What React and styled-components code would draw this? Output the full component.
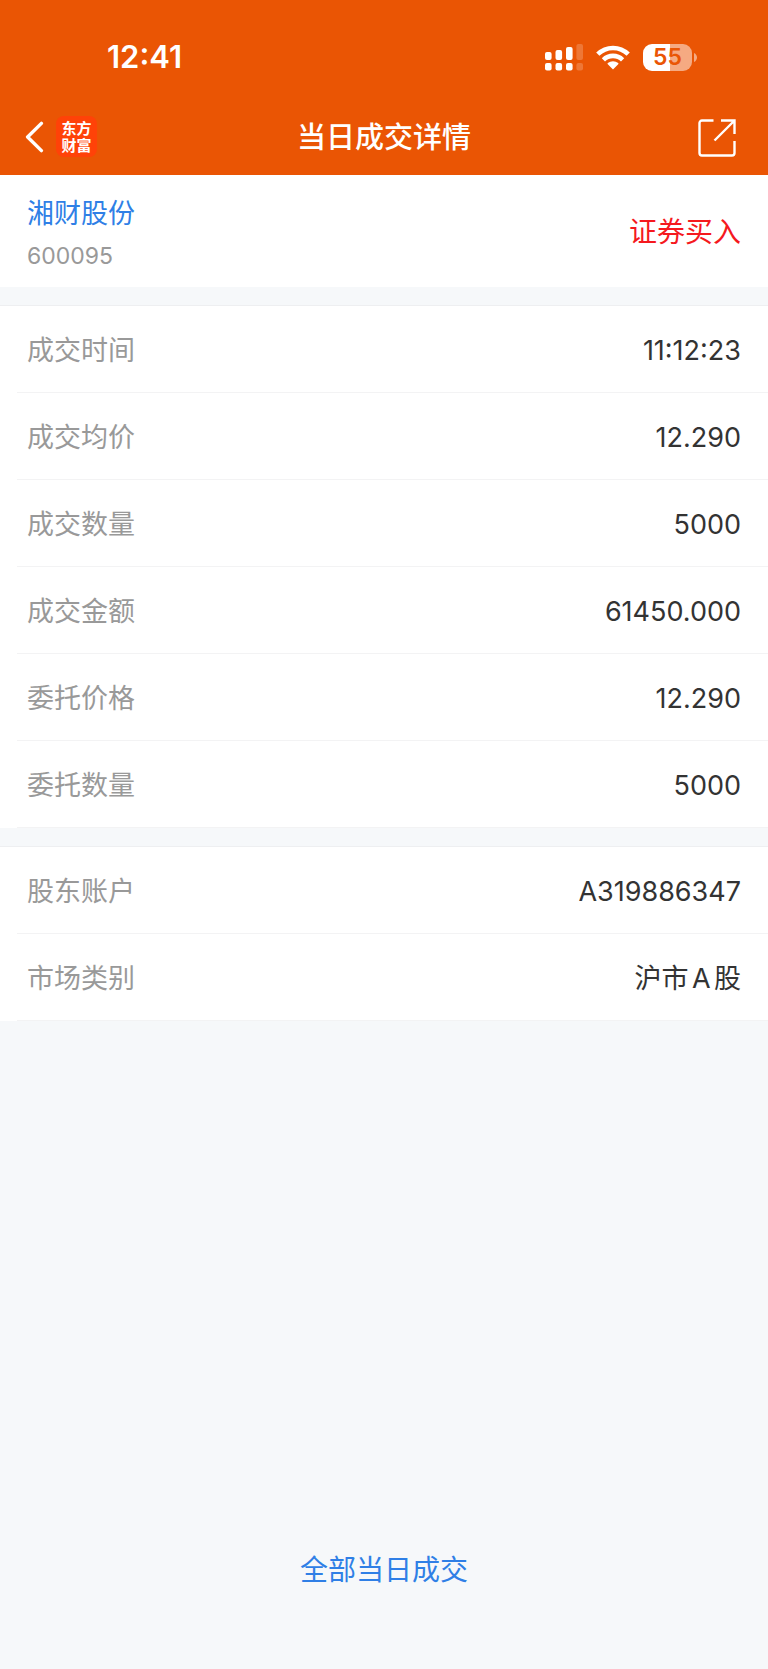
import React from 'react'
import styled, { createGlobalStyle } from 'styled-components'

const GlobalStyle = createGlobalStyle`
  * {
    box-sizing: border-box;
  }
  body {
    margin: 0;
    background: #f6f8fa;
    font-family: Inter, "Noto Sans CJK SC", sans-serif;
    text-autospace: normal;
  }
`

const Page = styled.div`
  display: flex;
  flex-direction: column;
  min-height: 100vh;
`

const Header = styled.header`
  background: #ea5504;
  color: #fff;
`

const StatusBar = styled.div`
  display: flex;
  align-items: center;
  justify-content: space-between;
  height: 100px;
  padding: 14px 71px 0 107px;
`

const Clock = styled.time`
  font-size: 31px;
  line-height: 36px;
  font-weight: 600;
`

const StatusIcons = styled.div`
  display: flex;
  align-items: center;
  gap: 13px;
`

const BatteryWrap = styled.div`
  display: flex;
  align-items: center;
  gap: 2px;
`

const Battery = styled.div`
  width: 49px;
  height: 27px;
  border-radius: 9px;
  background: linear-gradient(
    90deg,
    #fff ${({ $level }) => $level}%,
    #f5aa82 ${({ $level }) => $level}%
  );
  color: #ea5504;
  font-size: 23px;
  line-height: 27px;
  font-weight: 600;
  text-align: center;
`

const NavBar = styled.nav`
  display: grid;
  grid-template-columns: 1fr auto 1fr;
  align-items: center;
  height: 75px;
  padding: 0 25px;
`

const BackButton = styled.button`
  justify-self: start;
  display: flex;
  align-items: center;
  gap: 12px;
  padding: 0 0 2px;
  border: 0;
  background: none;
  color: #fff;
  font-family: inherit;
`

const Logo = styled.span`
  width: 41px;
  height: 41px;
  padding: 4px 0;
  border-radius: 8px;
  background: #ff4208;
  font-size: 15px;
  line-height: 17px;
  font-weight: 700;
`

const Title = styled.h1`
  margin: 0;
  font-size: 29px;
  line-height: 40px;
  font-weight: 500;
`

const ShareButton = styled.button`
  justify-self: end;
  display: flex;
  padding: 0 7px;
  border: 0;
  background: none;
  color: #fff;
`

const Summary = styled.section`
  display: flex;
  align-items: center;
  justify-content: space-between;
  height: 112px;
  padding: 0 27px;
  background: #fff;
`

const Stock = styled.div`
  padding-top: 4px;
`

const StockName = styled.a`
  display: block;
  color: #2f7fe6;
  font-size: 27px;
  line-height: 40px;
  text-decoration: none;
`

const StockCode = styled.div`
  padding-top: 6px;
  color: #999;
  font-size: 23px;
  line-height: 32px;
`

const Side = styled.div`
  padding-top: 2px;
  color: #f5191e;
  font-size: 28px;
  line-height: 40px;
`

const Group = styled.dl`
  margin: 19px 0 0;
  background: #fff;
  box-shadow: 0 -1px 0 #eeeff1;
`

const Row = styled.div`
  display: flex;
  align-items: center;
  justify-content: space-between;
  height: 87px;
  margin-left: 17px;
  padding: 4px 27px 0 10px;
  border-bottom: 1px solid #f3f3f4;
`

const Label = styled.dt`
  color: #999;
  font-size: 27px;
  line-height: 40px;
`

const Value = styled.dd`
  margin: 0;
  color: #333;
  font-size: 27px;
  line-height: 40px;
`

const Footer = styled.footer`
  display: flex;
  justify-content: center;
  margin-top: auto;
  padding: 40px 0 79px;
`

const AllTradesLink = styled.a`
  color: #2f7fe6;
  font-size: 28px;
  line-height: 40px;
  text-decoration: none;
`

const tradeRows = [
  ['成交时间', '11:12:23'],
  ['成交均价', '12.290'],
  ['成交数量', '5000'],
  ['成交金额', '61450.000'],
  ['委托价格', '12.290'],
  ['委托数量', '5000'],
]

const accountRows = [
  ['股东账户', 'A319886347'],
  ['市场类别', '沪市A股'],
]

const SignalIcon = () => (
  <svg width="38" height="27" viewBox="0 0 38 27" fill="currentColor" aria-hidden="true">
    <rect x="0" y="8" width="6.6" height="8" rx="2" />
    <rect x="10.5" y="6" width="6.6" height="10" rx="2" />
    <rect x="21" y="3" width="6.6" height="13" rx="2" />
    <rect x="0" y="19" width="6.6" height="7.5" rx="2" />
    <rect x="10.5" y="19" width="6.6" height="7.5" rx="2" />
    <rect x="21" y="19" width="6.6" height="7.5" rx="2" />
    <g opacity="0.2">
      <rect x="31.4" y="0" width="6.6" height="16" rx="2" />
      <rect x="31.4" y="19" width="6.6" height="7.5" rx="2" />
    </g>
  </svg>
)

const WifiIcon = () => (
  <svg width="34" height="25" viewBox="0 0 34 25" aria-hidden="true">
    <g fill="none" stroke="currentColor" strokeWidth="4.6">
      <path d="M1.8 9.2a21.6 21.6 0 0 1 30.4 0" />
      <path d="M7.4 14.8a13.7 13.7 0 0 1 19.2 0" />
    </g>
    <path
      d="M17 24.4 11.8 19.3c-.4-.4-.4-.9 0-1.2a8 8 0 0 1 10.4 0c.4.3.4.8 0 1.2z"
      fill="currentColor"
    />
  </svg>
)

const BatteryTip = () => (
  <svg width="3" height="9" viewBox="0 0 3 9" aria-hidden="true">
    <path d="M0 0c4 1.8 4 7.2 0 9z" fill="#f5aa82" />
  </svg>
)

const BackIcon = () => (
  <svg width="19" height="32" viewBox="0 0 19 32" fill="none" aria-hidden="true">
    <path
      d="M16.4 2.4 2.6 16l13.8 13.6"
      stroke="currentColor"
      strokeWidth="3.4"
      strokeLinecap="round"
      strokeLinejoin="round"
    />
  </svg>
)

const ShareIcon = () => (
  <svg
    width="38"
    height="38"
    viewBox="0 0 38 38"
    fill="none"
    stroke="currentColor"
    strokeWidth="2.4"
    aria-hidden="true"
  >
    <path d="M15.5 1.5H4A2.5 2.5 0 0 0 1.5 4v30A2.5 2.5 0 0 0 4 36.5h30a2.5 2.5 0 0 0 2.5-2.5V22" />
    <path d="M23 1.5h13.5v13.5M36.5 1.5l-20 20" />
  </svg>
)

const DetailGroup = ({ rows }) => (
  <Group>
    {rows.map(([label, value]) => (
      <Row key={label}>
        <Label>{label}</Label>
        <Value>{value}</Value>
      </Row>
    ))}
  </Group>
)

const App = () => {
  return (
    <Page>
      <GlobalStyle />
      <Header>
        <StatusBar>
          <Clock>12:41</Clock>
          <StatusIcons>
            <SignalIcon />
            <WifiIcon />
            <BatteryWrap>
              <Battery $level={55}>55</Battery>
              <BatteryTip />
            </BatteryWrap>
          </StatusIcons>
        </StatusBar>
        <NavBar>
          <BackButton type="button" aria-label="返回">
            <BackIcon />
            <Logo>
              东方
              <br />
              财富
            </Logo>
          </BackButton>
          <Title>当日成交详情</Title>
          <ShareButton type="button" aria-label="分享">
            <ShareIcon />
          </ShareButton>
        </NavBar>
      </Header>
      <main>
        <Summary>
          <Stock>
            <StockName href="#stock">湘财股份</StockName>
            <StockCode>600095</StockCode>
          </Stock>
          <Side>证券买入</Side>
        </Summary>
        <DetailGroup rows={tradeRows} />
        <DetailGroup rows={accountRows} />
      </main>
      <Footer>
        <AllTradesLink href="#all">全部当日成交</AllTradesLink>
      </Footer>
    </Page>
  )
}

export default App
